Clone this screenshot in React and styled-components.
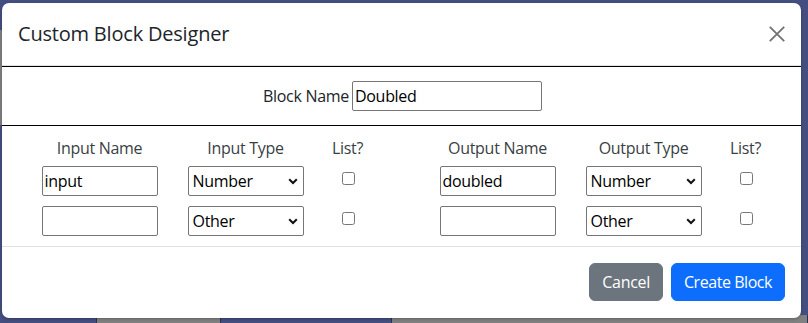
import styled, { createGlobalStyle } from "styled-components";

const GlobalStyle = createGlobalStyle`
  html, body {
    margin: 0;
    padding: 0;
  }
  body {
    background: #444e7f;
    font-family: "Open Sans", "Noto Sans", sans-serif;
    color: #212529;
    overflow: hidden;
  }
`;

const Screen = styled.div`
  position: relative;
  width: 808px;
  height: 323px;
  overflow: hidden;
  background: #444e7f;
  display: flex;
  flex-direction: column;
  justify-content: space-between;
`;

const SideStrip = styled.div`
  margin-top: 30px;
  width: 2px;
  height: 95px;
  background: #7f7f7f;
`;

const BottomStrip = styled.div`
  display: flex;
  height: 8px;
`;

const StripPiece = styled.div`
  width: ${(p) => p.w}px;
  flex: ${(p) => (p.w ? "none" : "1")};
  background: ${(p) => (p.gray ? "#808080" : "#444e7f")};
  border-right: 1px solid #2c3358;
`;

const Modal = styled.div`
  position: absolute;
  left: 2px;
  top: 3px;
  width: 799px;
  background: #fff;
  border-radius: 7px;
  overflow: hidden;
  box-shadow: 0 1px 3px rgba(0, 0, 0, 0.25);
`;

const Header = styled.div`
  display: flex;
  align-items: center;
  justify-content: space-between;
  padding: 16px;
  border-bottom: 1px solid #dee2e6;
`;

const Title = styled.h5`
  margin: 0;
  font-size: 20px;
  font-weight: 500;
  line-height: 30px;
  letter-spacing: -0.2px;
`;

const CloseButton = styled.button`
  display: flex;
  align-items: center;
  justify-content: center;
  width: 16px;
  height: 16px;
  padding: 0;
  border: 0;
  background: transparent;
  opacity: 0.55;
  cursor: pointer;
`;

const NameRow = styled.div`
  display: flex;
  align-items: center;
  justify-content: center;
  gap: 3px;
  padding: 14px 0 14px 2px;
  border-top: 1px solid #000;
  border-bottom: 1px solid #000;
`;

const Label = styled.label`
  font-size: 16px;
  line-height: 24px;
  letter-spacing: -0.3px;
`;

const TextInput = styled.input`
  box-sizing: border-box;
  width: ${(p) => p.w || 116}px;
  height: 30px;
  padding: 1px 2px;
  border: 1px solid #767676;
  border-radius: 2px;
  font-family: inherit;
  font-size: 16px;
  color: #000;
  letter-spacing: -0.3px;
  background: #fff;
`;

const Columns = styled.div`
  display: flex;
  justify-content: center;
  gap: 48px;
  padding: 10px 2px 0 0;
  border-bottom: 1px solid #dee2e6;
`;

const Group = styled.div`
  display: grid;
  grid-template-columns: 146px 146px 58px;
  grid-template-rows: 30px 40px 40px;
  justify-items: center;
  align-items: start;
`;

const ColHead = styled.div`
  font-size: 16px;
  line-height: 24px;
  color: #3a3f44;
  letter-spacing: -0.3px;
`;

const SelectWrap = styled.div`
  position: relative;
  width: 116px;
  height: 30px;
`;

const Select = styled.select`
  box-sizing: border-box;
  appearance: none;
  width: 116px;
  height: 30px;
  padding: 1px 4px;
  border: 1px solid #767676;
  border-radius: 2px;
  font-family: inherit;
  font-size: 16px;
  color: #000;
  letter-spacing: -0.3px;
  background: #fff;
`;

const Chevron = styled.svg`
  position: absolute;
  right: 6px;
  top: 12px;
  pointer-events: none;
`;

const Check = styled.input`
  width: 13px;
  height: 13px;
  margin: 6px 0 0 1px;
  accent-color: #0d6efd;
`;

const Footer = styled.div`
  display: flex;
  justify-content: flex-end;
  gap: 8px;
  padding: 16px 16px 17px;
`;

const Button = styled.button`
  height: 38px;
  padding: 0 12px;
  border: 1px solid ${(p) => (p.primary ? "#0d6efd" : "#6c757d")};
  border-radius: 6px;
  background: ${(p) => (p.primary ? "#0d6efd" : "#6c757d")};
  color: #fff;
  font-family: inherit;
  font-size: 16px;
  letter-spacing: ${(p) => (p.primary ? "-0.45px" : "-0.3px")};
  cursor: pointer;
`;

function TypeSelect({ value }) {
  return (
    <SelectWrap>
      <Select defaultValue={value}>
        <option>Number</option>
        <option>String</option>
        <option>Boolean</option>
        <option>Other</option>
      </Select>
      <Chevron width="10" height="7" viewBox="0 0 10 7">
        <path d="M1.2 1.3 L5 5 L8.8 1.3" fill="none" stroke="#111" strokeWidth="2" />
      </Chevron>
    </SelectWrap>
  );
}

function PortGroup({ kind, first }) {
  return (
    <Group>
      <ColHead>{kind} Name</ColHead>
      <ColHead>{kind} Type</ColHead>
      <ColHead>List?</ColHead>

      <TextInput defaultValue={first} />
      <TypeSelect value="Number" />
      <Check type="checkbox" />

      <TextInput defaultValue="" />
      <TypeSelect value="Other" />
      <Check type="checkbox" />
    </Group>
  );
}

export default function App() {
  return (
    <>
      <GlobalStyle />
      <Screen>
        <SideStrip />
        <BottomStrip>
          <StripPiece w={96} />
          <StripPiece w={123} gray />
          <StripPiece w={170} />
          <StripPiece gray />
        </BottomStrip>

        <Modal>
          <Header>
            <Title>Custom Block Designer</Title>
            <CloseButton aria-label="Close">
              <svg width="16" height="16" viewBox="0 0 16 16">
                <path d="M0.8 0.8 L15.2 15.2 M15.2 0.8 L0.8 15.2" stroke="#000" strokeWidth="1.8" />
              </svg>
            </CloseButton>
          </Header>

          <NameRow>
            <Label>Block Name</Label>
            <TextInput w={190} defaultValue="Doubled" />
          </NameRow>

          <Columns>
            <PortGroup kind="Input" first="input" />
            <PortGroup kind="Output" first="doubled" />
          </Columns>

          <Footer>
            <Button>Cancel</Button>
            <Button primary>Create Block</Button>
          </Footer>
        </Modal>
      </Screen>
    </>
  );
}
